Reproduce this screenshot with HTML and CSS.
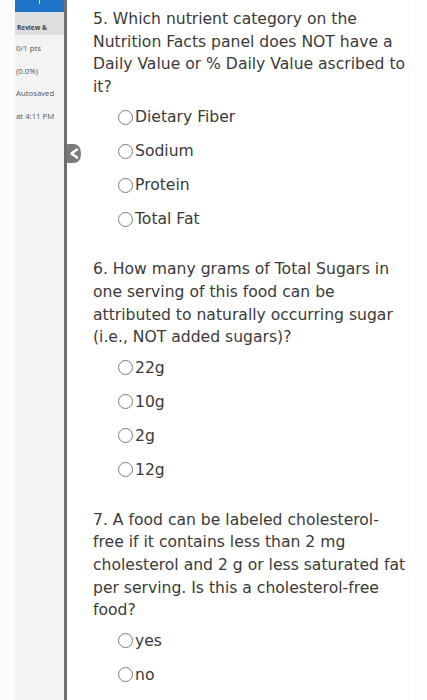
FILE: index.html
```html
<!DOCTYPE html>
<html>
<head>
<meta charset="utf-8">
<link rel="stylesheet" href="styles.css">
</head>
<body>
<div class="page">
  <div class="gutter"></div>
  <aside class="sidebar">
    <div class="topbar"><span class="topmark"></span></div>
    <div class="review">Review &amp;</div>
    <div class="meta">0/1 pts</div>
    <div class="meta">(0.0%)</div>
    <div class="meta">Autosaved</div>
    <div class="meta">at 4:11 PM</div>
  </aside>
  <main class="main">
    <div class="tab">
      <svg width="14" height="19" viewBox="0 0 14 19"><path d="M0 1 Q0 0 1 0 L6 0 Q14 0 14 9.5 Q14 19 6 19 L1 19 Q0 19 0 18 Z" fill="#7a7a7a"/><path d="M10 5.5 L4.5 9.5 L10 13.5" fill="none" stroke="#fff" stroke-width="2.6" stroke-linejoin="round" stroke-linecap="round"/></svg>
    </div>
    <section class="question">
      <p class="qtext">5. Which nutrient category on the Nutrition Facts panel does NOT have a Daily Value or % Daily Value ascribed to it?</p>
      <ul class="options">
        <li class="opt"><span class="radio"></span>Dietary Fiber</li>
        <li class="opt"><span class="radio"></span>Sodium</li>
        <li class="opt"><span class="radio"></span>Protein</li>
        <li class="opt"><span class="radio"></span>Total Fat</li>
      </ul>
    </section>
    <section class="question">
      <p class="qtext">6. How many grams of Total Sugars in one serving of this food can be attributed to naturally occurring sugar (i.e., NOT added sugars)?</p>
      <ul class="options">
        <li class="opt"><span class="radio"></span>22g</li>
        <li class="opt"><span class="radio"></span>10g</li>
        <li class="opt"><span class="radio"></span>2g</li>
        <li class="opt"><span class="radio"></span>12g</li>
      </ul>
    </section>
    <section class="question">
      <p class="qtext">7. A food can be labeled cholesterol-free if it contains less than 2 mg cholesterol and 2 g or less saturated fat per serving. Is this a cholesterol-free food?</p>
      <ul class="options">
        <li class="opt"><span class="radio"></span>yes</li>
        <li class="opt"><span class="radio"></span>no</li>
      </ul>
    </section>
  </main>
  <div class="rightstrip"></div>
</div>
</body>
</html>
```
FILE: styles.css
```css
html, body {
  margin: 0;
  padding: 0;
  background: #ffffff;
}
.page {
  display: flex;
  height: 700px;
  overflow: hidden;
  font-family: "DejaVu Sans", Verdana, sans-serif;
}
.gutter {
  width: 15px;
  flex: none;
  background: #fbfbfb;
}
.sidebar {
  width: 49px;
  flex: none;
  background: #f3f3f3;
  border-right: 3px solid #6e6e6e;
  font-family: "Open Sans", "Liberation Sans", sans-serif;
  color: #555;
}
.topbar {
  height: 12px;
  background: #1f74c9;
  display: flex;
  justify-content: center;
}
.topmark {
  width: 1px;
  height: 4px;
  background: #cfe2f5;
}
.review {
  height: 23px;
  background: #dedede;
  font-size: 6.5px;
  font-weight: bold;
  color: #444;
  padding: 0 0 3px 2px;
  box-sizing: border-box;
  display: flex;
  align-items: flex-end;
}
.meta {
  font-size: 7.8px;
  padding-left: 1px;
  height: 22.6px;
  line-height: 22.6px;
  white-space: nowrap;
}
.review + .meta {
  margin-top: 2px;
}
.main {
  flex: 1;
  position: relative;
  padding: 8px 0 0 26px;
  color: #3a3a3a;
}
.tab {
  position: absolute;
  left: 0;
  top: 144px;
  line-height: 0;
}
.question {
  margin-bottom: 22px;
}
.qtext {
  margin: 0;
  font-size: 15.6px;
  line-height: 22.6px;
  width: 314px;
}
.options {
  list-style: none;
  margin: 2px 0 0 0;
  padding: 0 0 0 25px;
}
.opt {
  display: flex;
  align-items: center;
  height: 34px;
  font-size: 15.6px;
}
.radio {
  width: 15px;
  height: 15px;
  border: 1.4px solid #7a7a7a;
  border-radius: 50%;
  box-sizing: border-box;
  margin-right: 2px;
  flex: none;
  background: #fff;
}
.rightstrip {
  width: 14px;
  flex: none;
  background: #fdfdfd;
}
```
